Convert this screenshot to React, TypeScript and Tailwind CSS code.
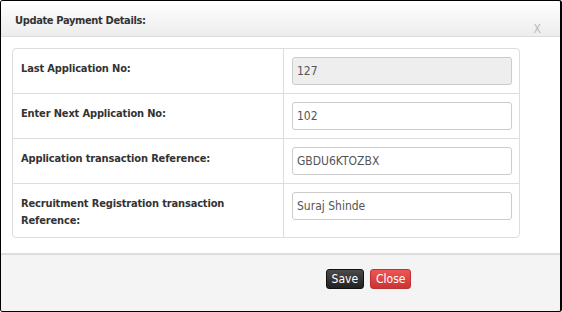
import React from "react";

const rows = [
  { label: "Last Application No:", value: "127", disabled: true },
  { label: "Enter Next Application No:", value: "102" },
  { label: "Application transaction Reference:", value: "GBDU6KTOZBX" },
  { label: "Recruitment Registration transaction Reference:", value: "Suraj Shinde" },
];

const font = { fontFamily: "Tahoma, 'DejaVu Sans Condensed', 'DejaVu Sans', sans-serif" };

export default function App() {
  return (
    <div
      className="w-[562px] h-[312px] bg-white border-l border-t border-b border-r-2 border-black rounded-[3px] overflow-hidden flex flex-col text-[12px] text-[#333]"
      style={font}
    >
      {/* Header */}
      <div className="h-[36px] shrink-0 flex items-start justify-between border-b border-[#ddd] bg-gradient-to-b from-white to-[#ededed] pl-[14px] pr-[19px]">
        <h3 className="font-bold text-[11px] tracking-[-0.35px] mt-[12px] leading-[16px]">Update Payment Details:</h3>
        <span className="text-[#bbb] mt-[22px] leading-[12px] text-[12px]">X</span>
      </div>

      {/* Body */}
      <div className="flex-1 pt-[11px] pl-[11px] pr-[40px]">
        <div className="border border-[#ddd] rounded-[4px] overflow-hidden">
          {rows.map((r, i) => (
            <div
              key={i}
              className={`flex ${i > 0 ? "border-t border-[#ddd]" : ""}`}
            >
              <div className="w-[271px] shrink-0 px-[8px] py-[8px] font-bold text-[11px] tracking-[-0.15px] leading-[17px] border-r border-[#ddd]">
                <div className="mt-[3px] w-[225px]">{r.label}</div>
              </div>
              <div className="flex-1 pl-[8px] pr-[8px] py-[8px] flex items-start">
                <input
                  readOnly
                  value={r.value}
                  disabled={r.disabled}
                  className={`w-[220px] h-[28px] px-[4px] border border-[#ccc] rounded-[3px] text-[12px] text-[#555] outline-none ${r.disabled ? "bg-[#eee]" : "bg-white"}`}
                  style={font}
                />
              </div>
            </div>
          ))}
        </div>
      </div>

      {/* Footer */}
      <div className="h-[58px] shrink-0 border-t-2 border-[#ddd] bg-[#f4f4f4] flex items-start justify-center pt-[14px] pl-[176px] gap-[6px]">
        <button
          className="h-[20px] px-[5px] rounded-[3px] text-white text-[12px] leading-[18px] border border-[#111] bg-gradient-to-b from-[#4a4a4a] to-[#222]"
          style={font}
        >
          Save
        </button>
        <button
          className="h-[20px] px-[5px] rounded-[3px] text-white text-[12px] leading-[18px] border border-[#b33] bg-gradient-to-b from-[#e55] to-[#c33]"
          style={font}
        >
          Close
        </button>
      </div>
    </div>
  );
}
